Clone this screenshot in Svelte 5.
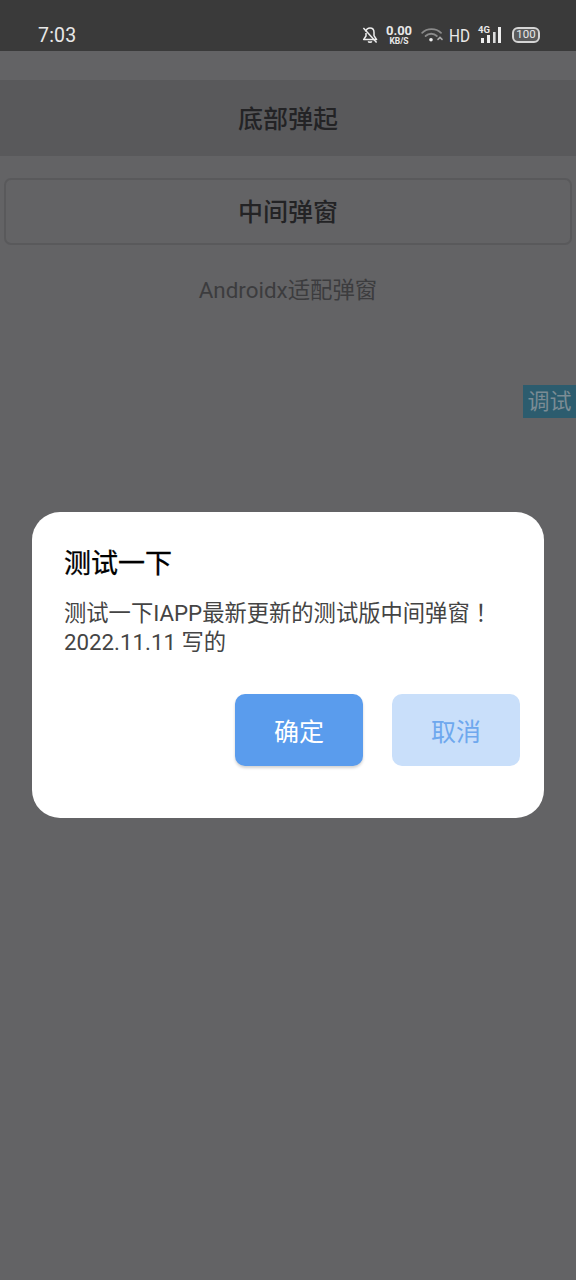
<script>
  let rows = [
    { label: '底部弹起', kind: 'band' },
    { label: '中间弹窗', kind: 'outlined' }
  ];
</script>

<div class="screen">
  <header class="status">
    <span class="clock">7:03</span>
    <div class="status-icons">
      <svg class="bell" width="16" height="18" viewBox="0 0 16 18" fill="none" stroke="#eee" stroke-width="1.5">
        <path d="M3.6 5.6 C4.4 3.2 6 2 8 2 C10.6 2 12 4 12 6.4 V9.6 L14.6 13.6 H1.6 L4 10 V7" stroke-linejoin="round" />
        <path d="M6.2 15.4 C6.8 16.6 9.2 16.6 9.8 15.4" />
        <path d="M1.4 2 L14.6 16.4" />
      </svg>
      <div class="speed">
        <span class="speed-num">0.00</span>
        <span class="speed-unit">KB/S</span>
      </div>
      <svg class="wifi" width="22" height="14" viewBox="0 0 22 14" fill="none" stroke-linecap="round">
        <path d="M1.2 4.8 C6 -0.2 15 -0.2 20 4.8" stroke="#8a8a8a" stroke-width="1.8" />
        <path d="M4.6 8 C7.6 5 12.8 5 15.8 8" stroke="#8a8a8a" stroke-width="1.8" />
        <circle cx="10" cy="11.8" r="1.8" fill="#eee" />
        <path d="M17 11.4 L19 9.4 L21 11.4" stroke="#aaa" stroke-width="1.5" />
      </svg>
      <span class="hd">HD</span>
      <div class="signal">
        <span class="net">4G</span>
        <svg width="22" height="17" viewBox="0 0 22 17" fill="#eee">
          <rect x="1" y="11" width="3" height="5" />
          <rect x="7" y="8" width="3" height="8" />
          <rect x="13" y="5" width="2.6" height="11" opacity="0.9" />
          <rect x="18" y="0" width="3" height="16" />
        </svg>
      </div>
      <div class="battery"><span>100</span></div>
    </div>
  </header>

  <main class="page">
    {#each rows as row}
      <button class="row {row.kind}">{row.label}</button>
    {/each}
    <p class="plain">Androidx适配弹窗</p>
  </main>

  <div class="debug">调试</div>

  <div class="scrim">
    <div class="dialog">
      <h2>测试一下</h2>
      <p class="body">测试一下IAPP最新更新的测试版中间弹窗<span class="bang">！</span><br />2022.11.11 写的</p>
      <div class="actions">
        <button class="btn ok">确定</button>
        <button class="btn cancel">取消</button>
      </div>
    </div>
  </div>
</div>

<style>
  :global(body) {
    margin: 0;
    background: #636365;
  }

  .screen {
    position: relative;
    width: 576px;
    height: 1280px;
    overflow: hidden;
    display: flex;
    flex-direction: column;
    background: #636365;
    font-family: Roboto, "Noto Sans CJK SC", sans-serif;
  }

  .status {
    height: 51px;
    flex: none;
    background: #3a3a3a;
    color: #e8e8e8;
    display: flex;
    align-items: center;
    justify-content: space-between;
    padding: 19px 36px 0 38px;
    box-sizing: border-box;
  }

  .clock {
    font-size: 19.5px;
    letter-spacing: 0.2px;
  }

  .status-icons {
    display: flex;
    align-items: center;
  }

  .bell {
    margin-right: 8px;
  }

  .speed {
    display: flex;
    flex-direction: column;
    align-items: center;
    font-weight: 700;
    line-height: 1;
    margin-right: 9px;
    width: 26px;
  }

  .speed-num {
    font-size: 13px;
  }

  .speed-unit {
    font-size: 8.5px;
  }

  .hd {
    font-size: 18px;
    margin: 0 10px 0 6px;
    width: 19px;
    transform: scaleX(0.85);
    transform-origin: left;
  }

  .signal {
    position: relative;
    width: 24px;
    height: 18px;
    margin-right: 10px;
  }

  .signal svg {
    position: absolute;
    left: 2px;
    top: 1px;
  }

  .net {
    position: absolute;
    left: 0;
    top: -1px;
    font-size: 9.5px;
    font-weight: 700;
    line-height: 1;
    background: #3a3a3a;
    padding-right: 1px;
  }

  .battery {
    width: 24px;
    height: 12px;
    border: 2px solid #d4d4d4;
    border-radius: 6px;
    display: flex;
    align-items: center;
    justify-content: center;
    background: #5a5a5a;
  }

  .battery span {
    font-size: 11.5px;
    line-height: 1;
  }

  .page {
    display: flex;
    flex-direction: column;
    padding-top: 29px;
    color: #232325;
  }

  .row {
    font: inherit;
    font-size: 25px;
    font-weight: 500;
    color: inherit;
    border: none;
    padding: 0;
    display: block;
    text-align: center;
  }

  .band {
    height: 76px;
    background: #59595b;
    padding-bottom: 2px;
  }

  .outlined {
    height: 67px;
    margin: 22px 4px 0;
    padding-bottom: 4px;
    background: #636365;
    border: 2px solid #59595b;
    border-radius: 7px;
    box-sizing: border-box;
  }

  .plain {
    margin: 30px 0 0;
    text-align: center;
    font-size: 22.4px;
    line-height: 30px;
    color: #3c3c3e;
  }

  .debug {
    position: absolute;
    right: 0;
    top: 385px;
    width: 53px;
    height: 33px;
    background: #2c5c6e;
    color: #7b8c95;
    font-size: 22px;
    line-height: 33px;
    text-align: center;
  }

  .scrim {
    position: absolute;
    inset: 50px 0 0;
    display: flex;
    align-items: center;
    justify-content: center;
  }

  .dialog {
    width: 512px;
    height: 306px;
    background: #fff;
    border-radius: 28px;
    padding: 33px 24px 0 32px;
    box-sizing: border-box;
  }

  h2 {
    margin: 0;
    font-size: 27px;
    font-weight: 400;
    line-height: 38px;
    color: #000;
    -webkit-text-stroke: 0.3px #000;
  }

  .body {
    margin: 14px 0 0;
    font-size: 22.3px;
    line-height: 29px;
    color: #444;
  }

  .bang {
    font-family: "Noto Sans CJK TC", sans-serif;
  }

  .actions {
    display: flex;
    justify-content: flex-end;
    gap: 29px;
    margin-top: 37px;
  }

  .btn {
    width: 128px;
    height: 72px;
    border: none;
    border-radius: 10px;
    font: inherit;
    font-size: 25px;
    padding: 0 0 1px;
  }

  .ok {
    background: #5a9ced;
    color: #fff;
    box-shadow: 0 2px 3px rgba(0, 0, 0, 0.18);
  }

  .cancel {
    background: #c9dffa;
    color: #6ea8ee;
  }
</style>
